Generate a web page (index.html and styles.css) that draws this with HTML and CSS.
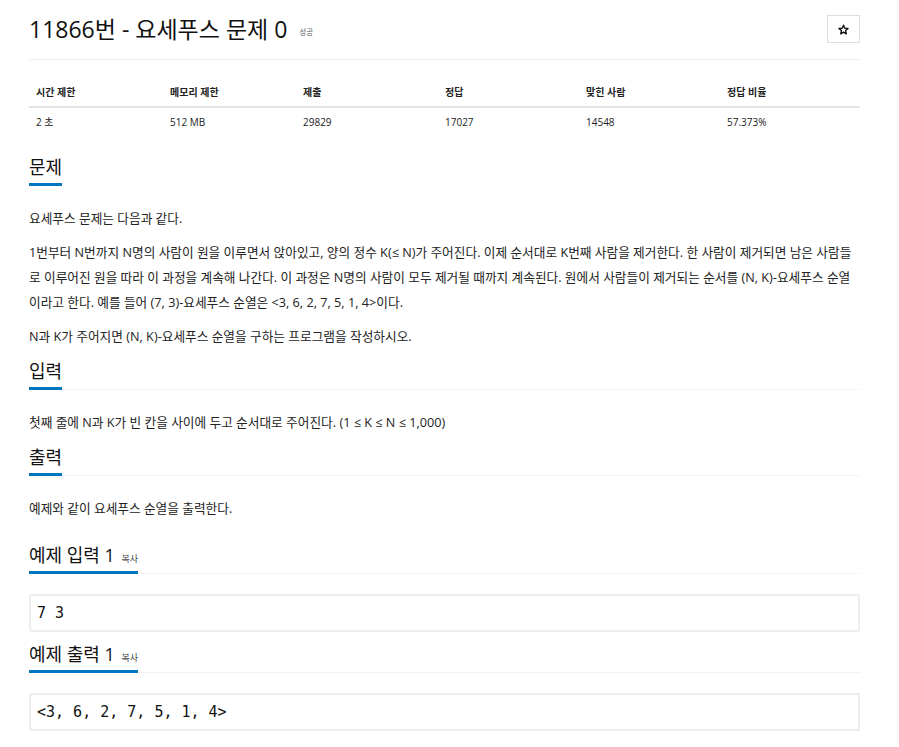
FILE: index.html
```html
<!DOCTYPE html>
<html lang="ko">
<head>
  <meta charset="UTF-8" />
  <title>11866번 - 요세푸스 문제 0</title>
  <link rel="stylesheet" href="styles.css">
</head>
<body>
  <div class="page">
    <div class="page-header">
      <h1 class="title">11866번 - 요세푸스 문제 0 <span class="result">성공</span></h1>
      <button class="star-btn" title="즐겨찾기">
        <svg width="11" height="11" viewBox="0 0 24 24"><path d="M12 2.5l2.8 6.6 7.1.6-5.4 4.7 1.6 7-6.1-3.7-6.1 3.7 1.6-7L2.1 9.7l7.1-.6z" fill="none" stroke="#111" stroke-width="3" stroke-linejoin="round"/></svg>
      </button>
    </div>

    <table class="info">
      <thead>
        <tr>
          <th>시간 제한</th>
          <th>메모리 제한</th>
          <th>제출</th>
          <th>정답</th>
          <th>맞힌 사람</th>
          <th>정답 비율</th>
        </tr>
      </thead>
      <tbody>
        <tr>
          <td>2 초</td>
          <td>512 MB</td>
          <td>29829</td>
          <td>17027</td>
          <td>14548</td>
          <td>57.373%</td>
        </tr>
      </tbody>
    </table>

    <section class="problem-section">
      <div class="headline plain"><h2>문제</h2></div>
      <div class="problem-text">
        <p>요세푸스 문제는 다음과 같다.</p>
        <p>1번부터 N번까지 N명의 사람이 원을 이루면서 앉아있고, 양의 정수 K(≤ N)가 주어진다. 이제 순서대로 K번째 사람을 제거한다. 한 사람이 제거되면 남은 사람들로 이루어진 원을 따라 이 과정을 계속해 나간다. 이 과정은 N명의 사람이 모두 제거될 때까지 계속된다. 원에서 사람들이 제거되는 순서를 (N, K)-요세푸스 순열이라고 한다. 예를 들어 (7, 3)-요세푸스 순열은 &lt;3, 6, 2, 7, 5, 1, 4&gt;이다.</p>
        <p>N과 K가 주어지면 (N, K)-요세푸스 순열을 구하는 프로그램을 작성하시오.</p>
      </div>
    </section>

    <section class="problem-section">
      <div class="headline"><h2>입력</h2></div>
      <div class="problem-text">
        <p>첫째 줄에 N과 K가 빈 칸을 사이에 두고 순서대로 주어진다. (1 ≤ K ≤ N ≤ 1,000)</p>
      </div>
    </section>

    <section class="problem-section">
      <div class="headline"><h2>출력</h2></div>
      <div class="problem-text">
        <p>예제와 같이 요세푸스 순열을 출력한다.</p>
      </div>
    </section>

    <section class="problem-section sample-first">
      <div class="headline"><h2>예제 입력 1 <a class="copy">복사</a></h2></div>
      <pre class="sample">7 3</pre>
    </section>

    <section class="problem-section">
      <div class="headline"><h2>예제 출력 1 <a class="copy">복사</a></h2></div>
      <pre class="sample">&lt;3, 6, 2, 7, 5, 1, 4&gt;</pre>
    </section>
  </div>
</body>
</html>
```

FILE: styles.css
```css
body {
  margin: 0;
  background: #fff;
  color: #222;
  font-family: "Open Sans", "Noto Sans CJK KR", sans-serif;
  font-size: 12.7px;
}
.page {
  width: 831px;
  margin-left: 29px;
}
.page-header {
  display: flex;
  justify-content: space-between;
  align-items: flex-start;
  padding-top: 15px;
  padding-bottom: 13px;
  border-bottom: 1px solid #eee;
}
.title {
  margin: 0;
  font-size: 23px;
  font-weight: 400;
  line-height: 28px;
  color: #111;
}
.result {
  font-size: 7.5px;
  color: #666;
  margin-left: 6px;
  vertical-align: middle;
}
.star-btn {
  width: 33px;
  height: 28px;
  margin-top: 0;
  padding: 0;
  background: #fff;
  border: 1px solid #ddd;
  display: flex;
  align-items: center;
  justify-content: center;
}

.info {
  width: 100%;
  margin-top: 17px;
  margin-bottom: 19px;
  border-collapse: collapse;
  font-size: 10px;
}
.info th,
.info td {
  text-align: left;
  vertical-align: middle;
  padding: 0 7px;
}
.info th {
  font-weight: 700;
  height: 29px;
  border-bottom: 2px solid #e5e5e5;
}
.info td {
  height: 28px;
}
.info th:nth-child(1) { width: 120px; }
.info th:nth-child(2) { width: 119px; }
.info th:nth-child(3) { width: 128px; }
.info th:nth-child(4) { width: 127px; }
.info th:nth-child(5) { width: 127px; }

.problem-section {
  margin-top: 10px;
}
.sample-first {
  margin-top: 22px;
}
.headline {
  border-bottom: 1px dotted #e6e6e6;
  margin-bottom: 20px;
}
.headline.plain {
  border-bottom-color: transparent;
}
.headline h2 {
  display: inline-block;
  margin: 0 0 -1px;
  padding: 0 0 4px;
  font-size: 18px;
  font-weight: 400;
  line-height: 24px;
  color: #111;
  border-bottom: 3px solid #0076c0;
}
.copy {
  font-size: 9px;
  line-height: 1;
  color: #444;
  margin-left: 2px;
}
.problem-text p {
  margin: 0 0 9px;
  line-height: 25px;
}
.problem-text p:last-child {
  margin-bottom: 0;
}
.sample {
  margin: 0 0 10px;
  padding: 8px 6px;
  border: 2px solid #eee;
  border-radius: 2px;
  font-family: "DejaVu Sans Mono", monospace;
  font-size: 15px;
  line-height: 18px;
  color: #111;
}
```
